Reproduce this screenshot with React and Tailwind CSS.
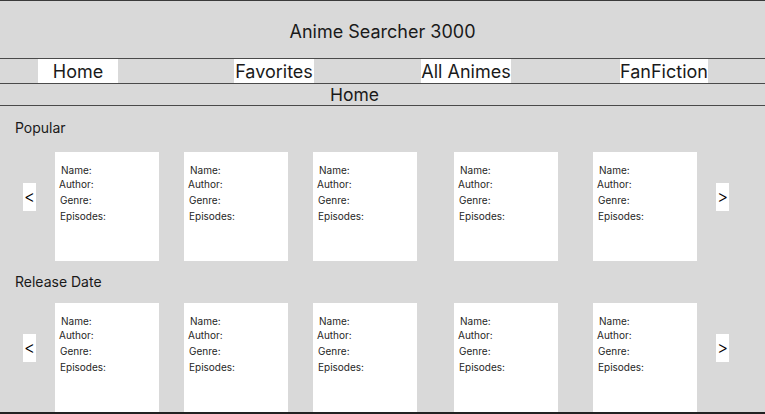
const NAV = [
  { label: "Home", cls: "ml-[38px] w-[80px]" },
  { label: "Favorites", cls: "ml-[116px] w-[80px]" },
  { label: "All Animes", cls: "ml-[107px] w-[90px]" },
  { label: "FanFiction", cls: "ml-[109px] w-[88px]" },
];

const CARD_GAPS = ["ml-[19px]", "ml-[25px]", "ml-[25px]", "ml-[37px]", "ml-[35px]"];

function AnimeCard({ gap }) {
  return (
    <div className={`${gap} h-[109px] w-[104px] shrink-0 bg-white pt-[11px] text-[10px] text-[#262626]`}>
      <div className="pl-[6px] leading-[14px]">Name:</div>
      <div className="pl-[4px] leading-[14px]">Author:</div>
      <div className="pl-[5px] pt-[2px] leading-[15px]">Genre:</div>
      <div className="pl-[5px] leading-[16px]">Episodes:</div>
    </div>
  );
}

function Arrow({ children, cls }) {
  return (
    <div
      className={`${cls} mt-[31px] flex h-[28px] w-[13px] shrink-0 items-center justify-center bg-white text-[17px] font-light leading-none text-black`}
    >
      {children}
    </div>
  );
}

function CardRow() {
  return (
    <div className="flex items-start">
      <Arrow cls="ml-[23px]">&lt;</Arrow>
      {CARD_GAPS.map((gap, i) => (
        <AnimeCard key={i} gap={gap} />
      ))}
      <Arrow cls="ml-[19px]">&gt;</Arrow>
    </div>
  );
}

export default function App() {
  return (
    <div
      className="h-[414px] w-[765px] overflow-hidden border-t border-b-2 border-t-[#3a3a3a] border-b-[#222] bg-[#d9d9d9] text-[#1a1a1a]"
      style={{ fontFamily: "Inter, 'Noto Sans', sans-serif" }}
    >
      {/* header */}
      <div className="flex h-[57px] items-center justify-center pt-[4px] text-[18px]">
        Anime Searcher 3000
      </div>

      {/* nav */}
      <div className="flex h-[26px] border-y border-[#4a4a4a]">
        {NAV.map((item) => (
          <div
            key={item.label}
            className={`${item.cls} flex h-full items-center justify-center bg-white pt-[2px] text-[18px] leading-none`}
          >
            {item.label}
          </div>
        ))}
      </div>

      {/* current page */}
      <div className="flex h-[22px] items-center border-b border-[#4a4a4a] pl-[330px] text-[17.5px] leading-none">
        Home
      </div>

      <div className="mt-[12px] px-[15px] text-[14px] leading-[20px]">Popular</div>
      <div className="mt-[14px]">
        <CardRow />
      </div>

      <div className="mt-[11px] px-[15px] text-[14px] leading-[20px]">Release Date</div>
      <div className="mt-[11px]">
        <CardRow />
      </div>
    </div>
  );
}
